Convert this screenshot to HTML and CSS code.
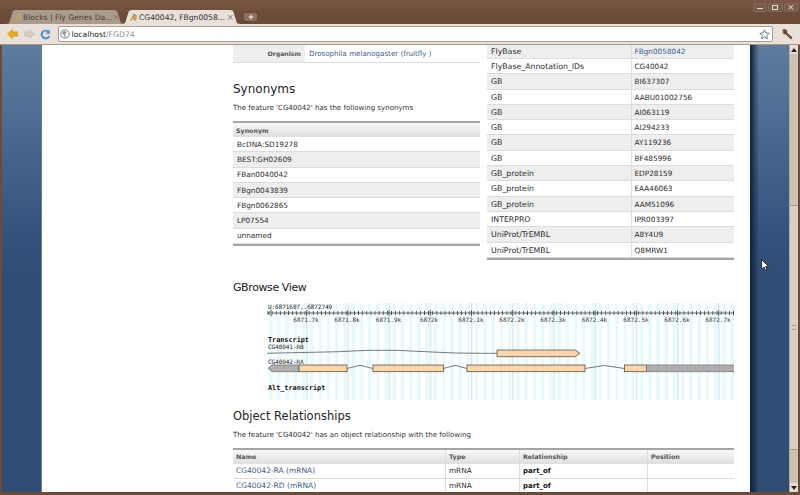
FILE: index.html
```html
<!DOCTYPE html>
<html lang="en">
<head>
<meta charset="utf-8">
<title>CG40042, FBgn0058042</title>
<link rel="stylesheet" href="styles.css">
</head>
<body>
<div class="window">
  <header class="tabstrip">
    <div class="tab tab-bg">
      <svg class="favicon" viewBox="0 0 10 10"><path class="fav-a" d="M1 9 4 3l2 1-3 5z"/><path class="fav-b" d="M4 2l2-1 3 2-1 6H5z"/></svg>
      <span class="tab-title">Blocks | Fly Genes Da...</span>
      <span class="tab-x">×</span>
    </div>
    <div class="tab tab-on">
      <svg class="favicon" viewBox="0 0 10 10"><path class="fav-a" d="M1 9 4 3l2 1-3 5z"/><path class="fav-b" d="M4 2l2-1 3 2-1 6H5z"/></svg>
      <span class="tab-title">CG40042, FBgn0058...</span>
      <span class="tab-x">×</span>
    </div>
    <div class="newtab"><svg viewBox="0 0 8 8"><path class="newtab-plus" d="M3 1h2v2h2v2H5v2H3V5H1V3h2z"/></svg></div>
    <div class="winctl">
      <span class="winbtn"><i class="glyph-min"></i></span>
      <span class="winbtn"><i class="glyph-max"></i></span>
      <span class="winbtn winbtn-x">×</span>
    </div>
  </header>

  <nav class="toolbar">
    <svg class="nav-ico" viewBox="0 0 12 12"><path class="ico-back" d="M0.5 6 6 .8V3.6h5.5v4.8H6v2.8z"/></svg>
    <svg class="nav-ico" viewBox="0 0 12 12"><path class="ico-fwd" d="M11.500 6 6 .8V3.600H.5v4.800H6v2.800z"/></svg>
    <svg class="nav-ico" viewBox="0 0 12 12"><path class="ico-reload" d="M10.800 1v4.600H6.200l1.700-1.700A3.100 3.100 0 1 0 9 7.600l2 1A5.300 5.300 0 1 1 9.400 2.400z"/></svg>
    <div class="omnibox">
      <svg class="globe" viewBox="0 0 10 10"><circle class="globe-c" cx="5" cy="5" r="4.200"/><path class="globe-m" d="M3 2.500 5.500 2 6.500 4 5 5.500 6 8 4.500 8 3.500 5.500 2 4.500z"/></svg>
      <span class="url-host">localhost</span><span class="url-path">/FGD74</span>
      <svg class="star" viewBox="0 0 12 12"><path class="star-p" d="M6 1l1.500 3.300 3.600.4-2.700 2.400.8 3.500L6 8.800 2.800 10.600l.8-3.500L.9 4.700l3.600-.4z"/></svg>
    </div>
    <svg class="wrench" viewBox="0 0 12 12"><path class="wrench-p" d="M1 2.500 3 1l2 .5L6.500 3.500 6.200 5 11.500 9.500 10 11.500 5 6.500 3 6.200 1.200 4.500 3 4.200z"/></svg>
  </nav>

  <div class="viewport">
    <aside class="side side-left"></aside>
    <main class="page">
      <div class="split">
        <section class="col">
          <div class="org">
            <span class="org-key">Organism</span>
            <a class="org-val link" href="#">Drosophila melanogaster (fruitfly )</a>
          </div>
          <h2 class="title title-first">Synonyms</h2>
          <p class="intro">The feature 'CG40042' has the following synonyms</p>
          <div class="table">
            <div class="thead">Synonym</div>
            <div class="row syn">BcDNA:SD19278</div>
            <div class="row syn">BEST:GH02609</div>
            <div class="row syn">FBan0040042</div>
            <div class="row syn">FBgn0043839</div>
            <div class="row syn">FBgn0062865</div>
            <div class="row syn">LP07554</div>
            <div class="row syn">unnamed</div>
          </div>
        </section>
        <section class="col col-right">
          <div class="table table-xref">
            <div class="row xref"><span>FlyBase</span><a class="link" href="#">FBgn0058042</a></div>
            <div class="row xref"><span>FlyBase_Annotation_IDs</span><span>CG40042</span></div>
            <div class="row xref"><span>GB</span><span>BI637307</span></div>
            <div class="row xref"><span>GB</span><span>AABU01002756</span></div>
            <div class="row xref"><span>GB</span><span>AI063119</span></div>
            <div class="row xref"><span>GB</span><span>AI294233</span></div>
            <div class="row xref"><span>GB</span><span>AY119236</span></div>
            <div class="row xref"><span>GB</span><span>BF485996</span></div>
            <div class="row xref"><span>GB_protein</span><span>EDP28159</span></div>
            <div class="row xref"><span>GB_protein</span><span>EAA46063</span></div>
            <div class="row xref"><span>GB_protein</span><span>AAM51096</span></div>
            <div class="row xref"><span>INTERPRO</span><span>IPR003397</span></div>
            <div class="row xref"><span>UniProt/TrEMBL</span><span>A8Y4U9</span></div>
            <div class="row xref"><span>UniProt/TrEMBL</span><span>Q8MRW1</span></div>
          </div>
        </section>
      </div>

      <section class="wide">
        <h2 class="title title-gb">GBrowse View</h2>
        <svg class="gbrowse" viewBox="0 0 467 97" width="467" height="97">
          <defs>
            <pattern id="stripes" width="8.24" height="97" patternUnits="userSpaceOnUse"><rect class="stripe" x="2" width="3.600" height="97"/></pattern>
            <pattern id="majors" x="39.200" width="41.200" height="97" patternUnits="userSpaceOnUse"><rect class="major" width="1.400" height="97"/></pattern>
            <pattern id="ticks" x="0.500" y="8" width="4.120" height="5" patternUnits="userSpaceOnUse"><rect class="tick" width="0.800" height="4"/></pattern>
            <pattern id="bigticks" x="39.200" y="7" width="41.200" height="7" patternUnits="userSpaceOnUse"><rect class="tick" width="0.800" height="6"/></pattern>
          </defs>
          <rect width="467" height="97" fill="url(#stripes)"/>
          <rect width="467" height="97" fill="url(#majors)"/>
          <text class="gb-small" x="1" y="5.500">U:6871607..6872749</text>
          <rect y="8" width="467" height="4" fill="url(#ticks)"/>
          <rect y="7" width="467" height="7" fill="url(#bigticks)"/>
          <path class="gb-line" d="M5 7 1 10 5 13M1 10H467"/>
          <g class="gb-labels">
            <text x="39" y="19">6871.7k</text><text x="80" y="19">6871.8k</text><text x="121.500" y="19">6871.9k</text><text x="162" y="19">6872k</text><text x="204" y="19">6872.1k</text><text x="245" y="19">6872.2k</text><text x="286" y="19">6872.3k</text><text x="327.500" y="19">6872.4k</text><text x="369" y="19">6872.5k</text><text x="410" y="19">6872.6k</text><text x="451" y="19">6872.7k</text>
          </g>
          <text class="gb-bold" x="1" y="38.500">Transcript</text>
          <text class="gb-small" x="1" y="46">CG40041-RB</text>
          <path class="gb-intron" d="M0 50.300 72 48.700 101 47.300H130L158 48.700 188 50 216 50.300H230"/>
          <path class="gb-exon" d="M230 47H308L313 50.300 308 53.700H230Z"/>
          <text class="gb-small" x="1" y="60.800">CG40042-RA</text>
          <path class="gb-utr" d="M1 65.300 5 62H32V68.700H5Z"/>
          <rect class="gb-exon" x="32" y="62" width="48" height="6.700"/>
          <path class="gb-intron" d="M80 65.500 93 62.300 106 65.500"/>
          <rect class="gb-exon" x="106" y="62" width="70.500" height="6.700"/>
          <path class="gb-intron" d="M176.500 65.500 188 62.300 200 65.500"/>
          <rect class="gb-exon" x="200" y="62" width="118" height="6.700"/>
          <path class="gb-intron" d="M318 65.500 337 62.500 357.500 65.500"/>
          <rect class="gb-exon" x="357.500" y="62" width="22" height="6.700"/>
          <rect class="gb-utr" x="379.500" y="62" width="88" height="6.700"/>
          <text class="gb-bold" x="1" y="87">Alt_transcript</text>
        </svg>
        <h2 class="title title-obj">Object Relationships</h2>
        <p class="intro intro-obj">The feature 'CG40042' has an object relationship with the following</p>
        <div class="table">
          <div class="thead thead-rel"><span>Name</span><span>Type</span><span>Relationship</span><span>Position</span></div>
          <div class="row rel"><a class="link" href="#">CG40042-RA (mRNA)</a><span>mRNA</span><b>part_of</b><span></span></div>
          <div class="row rel"><a class="link" href="#">CG40042-RD (mRNA)</a><span>mRNA</span><b>part_of</b><span></span></div>
        </div>
      </section>
    </main>
    <aside class="side side-right"></aside>
    <div class="scrollbar">
      <div class="sb-btn"><i class="sb-up"></i></div>
      <div class="sb-track"></div>
      <div class="sb-thumb"><i class="sb-grip"></i></div>
      <div class="sb-track sb-track-end"></div>
      <div class="sb-btn"><i class="sb-down"></i></div>
    </div>
  </div>
  <svg class="cursor" viewBox="0 0 8 12" width="8" height="12"><path class="cursor-p" d="M.5.5V10L3 8l1.500 3.300 1.600-.7L4.600 7.500H7.500z"/></svg>
</div>
</body>
</html>
```

FILE: styles.css
```css
* { box-sizing: border-box; }
html, body { margin: 0; height: 100%; overflow: hidden; }
body { font-family: "DejaVu Sans", sans-serif; color: #2d2d2d; }
a { text-decoration: none; }

.window {
  position: relative;
  width: 800px;
  height: 495px;
  display: flex;
  flex-direction: column;
  overflow: hidden;
  padding: 0 2px 3px;
  background: #6d4b39;
  box-shadow: inset 0 1px 0 #8f7465;
}

/* tab strip */
.tabstrip {
  height: 24px;
  margin: 0 -2px;
  padding: 10px 0 0 6px;
  display: flex;
  position: relative;
  background: linear-gradient(#7a5845, #6d4b39 14px);
  flex: none;
}
.tab {
  width: 118px;
  height: 14px;
  margin-right: -2px;
  padding: 0 6px 0 7px;
  display: flex;
  align-items: center;
  clip-path: polygon(0 100%, 3px 95%, 7px 6%, 10px 0, calc(100% - 10px) 0, calc(100% - 7px) 6%, calc(100% - 3px) 95%, 100% 100%);
  font-size: 7.600px;
}
.tab-bg { background: #ab9a8e; color: #4a3c33; }
.tab-on { background: #e9e1d9; color: #2e2a26; }
.favicon { width: 9px; height: 10px; flex: none; margin-right: 1px; }
.fav-a { fill: #c9a23f; }
.fav-b { fill: #b5a177; }
.tab-title { flex: 1; white-space: nowrap; }
.tab-x { color: #86776c; font-size: 9px; line-height: 1; }
.newtab {
  width: 13px;
  height: 8px;
  margin: 3px 0 0 6px;
  padding: 1px 3px;
  display: flex;
  justify-content: center;
  background: #8b6f60;
  border-radius: 2px 2px 3px 3px;
}
.newtab svg { width: 6px; height: 6px; }
.newtab-plus { fill: #dcd3cc; }
.winctl {
  position: absolute;
  top: 3px;
  right: 2px;
  display: flex;
  gap: 1px;
}
.winbtn {
  width: 14.500px;
  height: 9px;
  display: flex;
  align-items: center;
  justify-content: center;
  border: 1px solid #856a5a;
  border-radius: 2px;
  background: #7a5a49;
  color: #e6dcd4;
  font-size: 9px;
  line-height: 1;
}
.glyph-min { width: 6px; height: 1px; margin-top: 2px; background: #e6dcd4; }
.glyph-max { width: 6px; height: 5px; border: 1px solid #e6dcd4; }

/* toolbar */
.toolbar {
  height: 21px;
  margin: 0 -2px;
  padding: 0 7px 0 7px;
  display: flex;
  align-items: center;
  background: #e9e1d9;
  border-bottom: 1px solid #a79a8d;
  flex: none;
}
.nav-ico { width: 11px; height: 12px; margin-right: 5.500px; flex: none; }
.ico-back { fill: #e8a820; stroke: #c98a14; stroke-width: .5; }
.ico-fwd { fill: #d4ccc0; stroke: #c8bfb2; stroke-width: .5; }
.ico-reload { fill: #4a8fd6; }
.omnibox {
  width: 715px;
  height: 16px;
  margin-left: 1px;
  padding: 0 2px 0 1px;
  display: flex;
  align-items: center;
  background: #fff;
  border: 1px solid #aa9f94;
  border-radius: 2px;
  font-size: 7.700px;
}
.globe { width: 10px; height: 10px; margin-right: 2px; flex: none; }
.globe-c { fill: #fff; stroke: #7b7b7b; stroke-width: 1; }
.globe-m { fill: #9a9a9a; }
.url-host { color: #222; }
.url-path { color: #8a8a8a; }
.star { width: 11px; height: 11px; margin-left: auto; }
.star-p { fill: #fff; stroke: #5b6f85; stroke-width: 1; }
.wrench { width: 12px; height: 12px; margin-left: 8px; flex: none; }
.wrench-p { fill: #6a4633; }

/* page frame */
.viewport { flex: 1; min-height: 0; display: flex; }
.side {
  flex: none;
  height: 100%;
  background: linear-gradient(#5f7c9f, #34527c 190px, #304d76 230px, #304d76);
}
.side-left { width: 40px; border-right: 1px solid #5f7ea6; }
.side-right { width: 39px; }
.side-right::before {
  content: "";
  display: block;
  width: 9px;
  height: 100%;
  background: linear-gradient(90deg, #10203a, rgba(16, 32, 58, 0));
}
.scrollbar {
  width: 9px;
  flex: none;
  display: flex;
  flex-direction: column;
  background: #cdc1b4;
  border-left: 1px solid #b6a99b;
}
.sb-btn { height: 9px; display: flex; align-items: center; justify-content: center; background: #e7dfd7; }
.sb-up { border: 3px solid transparent; border-top: 0; border-bottom: 4px solid #222; }
.sb-down { border: 3px solid transparent; border-bottom: 0; border-top: 4px solid #222; }
.sb-track { height: 151px; background: #cdc1b4; }
.sb-track-end { height: 39px; flex: 1; }
.sb-thumb {
  height: 245px;
  display: flex;
  align-items: center;
  justify-content: center;
  background: #d9cfc4;
  border-top: 1px solid #a89b8d;
  border-bottom: 1px solid #a89b8d;
}
.sb-grip { width: 4px; height: 5px; border-top: 1px solid #a89b8d; border-bottom: 1px solid #a89b8d; }

/* page */
.page {
  width: 708px;
  flex: none;
  height: 100%;
  overflow: hidden;
  padding-left: 191px;
  background: #fff;
  font-size: 7.300px;
}
.split { display: flex; gap: 7px; width: 501px; }
.col { width: 247px; flex: none; }
.wide { width: 501px; }

.org {
  height: 18px;
  display: grid;
  grid-template-columns: 72px 1fr;
  align-items: center;
  border-bottom: 1px solid #ddd;
}
.org-key {
  height: 100%;
  padding-right: 4px;
  display: flex;
  align-items: center;
  justify-content: flex-end;
  background: #eee;
  color: #555;
  font-weight: bold;
  font-size: 6.200px;
}
.org-val { padding-left: 4px; font-size: 7.100px; }
.link { color: #3d5c8c; }

.title { margin: 0; height: 20px; line-height: 22px; font-weight: normal; font-size: 12px; color: #222; }
.title-first { margin-top: 15px; }
.title-gb { margin-top: 17px; font-size: 11px; letter-spacing: -.4px; }
.title-obj { margin-top: 5px; font-size: 11.500px; }
.intro { margin: 4px 0 7px; height: 12px; line-height: 12px; font-size: 7.060px; color: #333; }
.intro-obj { margin: 4px 0 7px; }

.table { border-top: 2px solid #a5a5a5; }
.table-xref { margin-top: -1.300px; border-top: 0; border-bottom: 2px solid #a5a5a5; }
.col .table:not(.table-xref) { border-bottom: 2px solid #a5a5a5; }
.thead {
  height: 14px;
  padding-left: 3px;
  display: flex;
  align-items: center;
  background: linear-gradient(#f8f8f8, #dedede);
  color: #555;
  font-weight: bold;
  font-size: 6.300px;
}
.row {
  height: 15.300px;
  align-items: center;
  border-bottom: 1px solid #dcdcdc;
  white-space: nowrap;
}
.syn { display: flex; padding-left: 4px; }
.syn:nth-child(odd) { background: #eee; }
.xref {
  display: grid;
  grid-template-columns: 144.500px 1fr;
}
.xref:nth-child(odd) { background: #eee; }
.xref > :first-child { padding-left: 4px; border-right: 1px solid #ddd; line-height: 15px; font-size: 7.800px; }
.xref > :last-child { padding-left: 3px; }
.thead-rel, .rel {
  display: grid;
  grid-template-columns: 212px 74px 128px 1fr;
  padding-left: 0;
}
.thead-rel > *, .rel > * { height: 100%; padding-left: 3px; line-height: 14px; }
.thead-rel > * + *, .rel > * + * { border-left: 1px solid #ddd; }
.rel > b { color: #111; font-size: 7px; }
.rel > a { font-size: 7.500px; }

/* GBrowse picture */
.gbrowse { display: block; margin: 6px 0 0 34px; }
.stripe { fill: #e8f9fb; }
.major { fill: #cfe9f3; }
.tick { fill: #444; }
.gb-line { fill: none; stroke: #444; stroke-width: .8; }
.gb-small { font-family: "DejaVu Sans Mono", monospace; font-size: 6px; letter-spacing: -.05px; fill: #222; }
.gb-labels text { font-family: "DejaVu Sans Mono", monospace; font-size: 6px; text-anchor: middle; fill: #333; }
.gb-bold { font-family: "DejaVu Sans Mono", monospace; font-weight: bold; font-size: 6.800px; fill: #111; }
.gb-intron { fill: none; stroke: #555; stroke-width: .8; }
.gb-exon { fill: #fbd6ad; stroke: #5c5148; stroke-width: .8; }
.gb-utr { fill: #aeaeae; stroke: #777; stroke-width: .8; }

.cursor { position: absolute; left: 761px; top: 259px; }
.cursor-p { fill: #fff; stroke: #111; stroke-width: .8; }
```
